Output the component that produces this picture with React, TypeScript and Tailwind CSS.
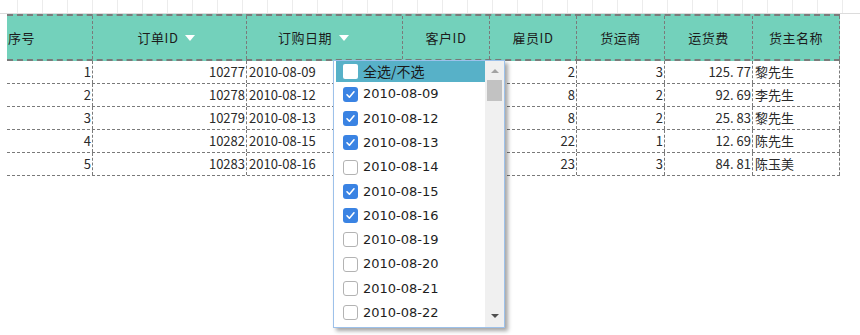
import React from 'react';

const cols = ['w-[86px]', 'w-[154px]', 'w-[156px]', 'w-[87px]', 'w-[87px]', 'w-[88px]', 'w-[88px]', 'w-[87px]'];

const rows = [
  ['1', '10277', '2010-08-09', '', '2', '3', '125. 77', '黎先生'],
  ['2', '10278', '2010-08-12', '', '8', '2', '92. 69', '李先生'],
  ['3', '10279', '2010-08-13', '', '8', '2', '25. 83', '黎先生'],
  ['4', '10282', '2010-08-15', '', '22', '1', '12. 69', '陈先生'],
  ['5', '10283', '2010-08-16', '', '23', '3', '84. 81', '陈玉美'],
];

// left-aligned columns: date and shipper name
const leftCols = [2, 7];

const headPad = ['pl-px', 'justify-center pr-[6px]', 'justify-center pr-[22px]', 'justify-center', 'justify-center', 'justify-center', 'justify-center', 'justify-center'];

const dates = [
  ['2010-08-09', true],
  ['2010-08-12', true],
  ['2010-08-13', true],
  ['2010-08-14', false],
  ['2010-08-15', true],
  ['2010-08-16', true],
  ['2010-08-19', false],
  ['2010-08-20', false],
  ['2010-08-21', false],
  ['2010-08-22', false],
] as const;

const cjk = { fontFamily: '"Noto Sans CJK SC", "DejaVu Sans", sans-serif' };

function Caret() {
  return <span className="inline-block ml-[7px] w-0 h-0 border-x-[5px] border-x-transparent border-t-[6px] border-t-white" />;
}

function Box({ checked }: { checked: boolean }) {
  if (checked)
    return (
      <span className="w-[15px] h-[15px] rounded-[3px] bg-[#3a83e3] grid place-items-center shrink-0">
        <svg width="11" height="11" viewBox="0 0 11 11">
          <path d="M2 5.8 L4.4 8.2 L9 2.8" fill="none" stroke="white" strokeWidth="1.6" strokeLinecap="round" strokeLinejoin="round" />
        </svg>
      </span>
    );
  return <span className="w-[15px] h-[15px] rounded-[3px] border border-[#b3b3b3] bg-white shrink-0" />;
}

export default function App() {
  return (
    <div className="relative w-[860px] h-[335px] overflow-hidden bg-white" style={cjk}>
      {/* sheet behind */}
      <div className="flex h-[14px] border-b border-[#dcdcdc]">
        <div className="w-[18px] h-full border-r border-[#ececec] shrink-0" />
        {Array.from({ length: 34 }).map((_, i) => (
          <div key={i} className="w-[25px] h-full border-r border-[#ececec] shrink-0" />
        ))}
      </div>

      <div className="ml-[7px] w-[833px]">
        {/* header */}
        <div className="flex h-[47px] bg-[#73d1bb] border-y-2 border-dashed border-[#7a7a7a] text-[13px] text-[#1c1c1c]">
          {['序号', '订单ID', '订购日期', '客户ID', '雇员ID', '货运商', '运货费', '货主名称'].map((h, i) => (
            <div
              key={h}
              className={`${cols[i]} shrink-0 h-full border-r border-dashed border-[#7a7a7a] flex items-center ${headPad[i]}`}
            >
              <span className="tracking-[0.5px]">{h}</span>
              {(i === 1 || i === 2) && <Caret />}
            </div>
          ))}
        </div>

        {/* body */}
        {rows.map((r, ri) => (
          <div key={ri} className="flex h-[23px] border-b border-dashed border-[#7a7a7a] text-[13px] text-[#2a2a2a]">
            {r.map((v, ci) => (
              <div
                key={ci}
                className={`${cols[ci]} shrink-0 h-full border-r border-dashed border-[#7a7a7a] leading-[22px] whitespace-nowrap overflow-hidden ${
                  leftCols.includes(ci) ? 'text-left pl-[2px]' : 'text-right pr-px'
                }`}
              >
                {v}
              </div>
            ))}
          </div>
        ))}
      </div>

      {/* date filter popup */}
      <div className="absolute left-[333px] top-[60px] w-[172px] h-[268px] bg-white border border-[#9dc1ea] shadow-[3px_3px_4px_rgba(0,0,0,0.35)] flex">
        <div className="flex-1 flex flex-col pl-[2px]">
          <div className="h-[21px] bg-[#57b1c8] flex items-center pl-[7px] gap-[5px] text-[14px] text-[#1a1a1a]">
            <span className="w-[15px] h-[15px] bg-white rounded-[2px] shrink-0" />
            <span>全选/不选</span>
          </div>
          {dates.map(([d, c]) => (
            <div key={d} className="h-[24.3px] flex items-center pl-[7px] gap-[5px] text-[13px] text-[#1e1e1e]" style={{ fontFamily: '"DejaVu Sans", sans-serif' }}>
              <Box checked={c} />
              <span>{d}</span>
            </div>
          ))}
        </div>
        <div className="w-[19px] h-full bg-[#f0f0f0] flex flex-col items-center">
          <div className="h-[19px] flex items-center justify-center">
            <span className="w-0 h-0 border-x-[4px] border-x-transparent border-b-[4px] border-b-[#a3a3a3]" />
          </div>
          <div className="w-[15px] h-[21px] bg-[#c2c2c2]" />
          <div className="flex-1" />
          <div className="h-[22px] flex items-center justify-center">
            <span className="w-0 h-0 border-x-[4px] border-x-transparent border-t-[4px] border-t-[#505050]" />
          </div>
        </div>
      </div>
    </div>
  );
}
